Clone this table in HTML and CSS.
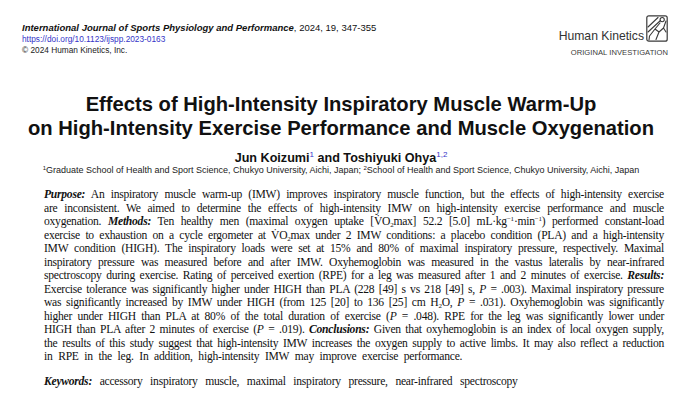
FILE: index.html
```html
<!DOCTYPE html>
<html lang="en">
<head>
<meta charset="utf-8">
<title>Effects of High-Intensity Inspiratory Muscle Warm-Up</title>
<link rel="stylesheet" href="styles.css">
</head>
<body>
<div class="page">
  <header class="masthead">
    <div class="citation">
      <div class="journal"><span class="jname">International Journal of Sports Physiology and Performance</span>, 2024, 19, 347-355</div>
      <div class="doi">https://doi.org/10.1123/ijspp.2023-0163</div>
      <div class="copy">© 2024 Human Kinetics, Inc.</div>
    </div>
    <div class="brand">
      <div class="brand-row">
        <span class="brand-name">Human Kinetics</span>
        <svg class="logo" viewBox="0 0 22 27" width="22" height="27" aria-hidden="true">
          <rect x="0.8" y="0.8" width="20.4" height="25.4" rx="2" fill="none" stroke="#3a3a3a" stroke-width="1.2"/>
          <circle cx="16.2" cy="4.6" r="2.1" fill="none" stroke="#3a3a3a" stroke-width="1.1"/>
          <path d="M2 12 L12 2.5 M2 17 L14.5 5.5 M14 8 L9 14 L13 17 L10 24.5 M9 14 L3.5 21 L3 25 M13 17 L17.5 13 L20 6 M17.5 13 L20 17" fill="none" stroke="#3a3a3a" stroke-width="1.1" stroke-linejoin="round" stroke-linecap="round"/>
        </svg>
      </div>
      <div class="section-label">ORIGINAL INVESTIGATION</div>
    </div>
  </header>

  <h1 class="title">Effects of High-Intensity Inspiratory Muscle Warm-Up<br>on High-Intensity Exercise Performance and Muscle Oxygenation</h1>

  <p class="authors">Jun Koizumi<sup class="ref">1</sup> and Toshiyuki Ohya<sup class="ref">1,2</sup></p>
  <p class="affil"><sup>1</sup>Graduate School of Health and Sport Science, Chukyo University, Aichi, Japan; <sup>2</sup>School of Health and Sport Science, Chukyo University, Aichi, Japan</p>

  <div class="abstract">
    <span class="ln"><b>Purpose:</b> An inspiratory muscle warm-up (IMW) improves inspiratory muscle function, but the effects of high-intensity exercise</span>
    <span class="ln">are inconsistent. We aimed to determine the effects of high-intensity IMW on high-intensity exercise performance and muscle</span>
    <span class="ln">oxygenation. <b>Methods:</b> Ten healthy men (maximal oxygen uptake [V̇O<sub>2</sub>max] 52.2 [5.0] mL·kg<sup>−1</sup>·min<sup>−1</sup>) performed constant-load</span>
    <span class="ln">exercise to exhaustion on a cycle ergometer at V̇O<sub>2</sub>max under 2 IMW conditions: a placebo condition (PLA) and a high-intensity</span>
    <span class="ln">IMW condition (HIGH). The inspiratory loads were set at 15% and 80% of maximal inspiratory pressure, respectively. Maximal</span>
    <span class="ln">inspiratory pressure was measured before and after IMW. Oxyhemoglobin was measured in the vastus lateralis by near-infrared</span>
    <span class="ln">spectroscopy during exercise. Rating of perceived exertion (RPE) for a leg was measured after 1 and 2 minutes of exercise. <b>Results:</b></span>
    <span class="ln">Exercise tolerance was significantly higher under HIGH than PLA (228 [49] s vs 218 [49] s, <i>P</i> = .003). Maximal inspiratory pressure</span>
    <span class="ln">was significantly increased by IMW under HIGH (from 125 [20] to 136 [25] cm H<sub>2</sub>O, <i>P</i> = .031). Oxyhemoglobin was significantly</span>
    <span class="ln">higher under HIGH than PLA at 80% of the total duration of exercise (<i>P</i> = .048). RPE for the leg was significantly lower under</span>
    <span class="ln">HIGH than PLA after 2 minutes of exercise (<i>P</i> = .019). <b>Conclusions:</b> Given that oxyhemoglobin is an index of local oxygen supply,</span>
    <span class="ln">the results of this study suggest that high-intensity IMW increases the oxygen supply to active limbs. It may also reflect a reduction</span>
    <span class="ln last">in RPE in the leg. In addition, high-intensity IMW may improve exercise performance.</span>
  </div>

  <p class="keywords"><b>Keywords:</b> accessory inspiratory muscle, maximal inspiratory pressure, near-infrared spectroscopy</p>
</div>
</body>
</html>
```

FILE: styles.css
```css
html, body {
  margin: 0;
  padding: 0;
  background: #ffffff;
}

.page {
  width: 680px;
  height: 400px;
  overflow: hidden;
  box-sizing: border-box;
  padding: 15px 12px 0 22px;
  color: #111;
}

.masthead {
  display: flex;
  justify-content: space-between;
  align-items: flex-start;
}

.citation {
  font-family: "Liberation Sans", Arial, sans-serif;
  padding-top: 7px;
}

.journal {
  font-size: 9.5px;
  line-height: 12px;
  color: #111;
}

.jname {
  font-weight: bold;
  font-style: italic;
}

.doi {
  font-size: 8.3px;
  line-height: 11px;
  color: #3434c8;
}

.copy {
  font-size: 8.3px;
  line-height: 11px;
  color: #222;
}

.brand {
  display: flex;
  flex-direction: column;
  align-items: flex-end;
  font-family: "Liberation Sans", Arial, sans-serif;
}

.brand-row {
  display: flex;
  align-items: flex-end;
  gap: 2px;
}

.brand-name {
  font-size: 12.2px;
  line-height: 14px;
  color: #333;
  margin-bottom: -1px;
}

.logo {
  display: block;
}

.section-label {
  font-size: 7.6px;
  line-height: 10px;
  color: #3a3a3a;
  margin-top: 6px;
  letter-spacing: 0.05px;
}

.title {
  font-family: "Liberation Sans", Arial, sans-serif;
  font-weight: bold;
  font-size: 20.2px;
  line-height: 24px;
  text-align: center;
  margin: 34px 0 0 -8px;
  color: #111;
}

.authors {
  font-family: "Liberation Sans", Arial, sans-serif;
  font-weight: bold;
  font-size: 12.6px;
  line-height: 13px;
  text-align: center;
  margin: 12px 0 0 -8px;
}

.authors .ref {
  color: #3434c8;
  font-weight: normal;
  font-size: 8px;
  line-height: 0;
  vertical-align: 5px;
}

.affil {
  font-family: "Liberation Sans", Arial, sans-serif;
  font-size: 9px;
  line-height: 10px;
  text-align: center;
  margin: 0 0 0 -8px;
  color: #222;
}

.affil sup {
  font-size: 6px;
  line-height: 0;
  vertical-align: 3px;
}

.abstract {
  font-family: "Liberation Serif", "Times New Roman", serif;
  font-size: 11.6px;
  letter-spacing: -0.25px;
  line-height: 13.5px;
  margin: 13px 0 0 22px;
  width: 620px;
  color: #111;
}

.ln {
  display: block;
  text-align: justify;
  text-align-last: justify;
  white-space: nowrap;
}

.ln.last {
  text-align-last: left;
  word-spacing: 3px;
}

.abstract b, .keywords b {
  font-style: italic;
  font-weight: bold;
}

.abstract sub, .abstract sup {
  font-size: 7px;
  line-height: 0;
}

.abstract sub {
  vertical-align: -1.5px;
}

.abstract sup {
  vertical-align: 4px;
}

.keywords {
  font-family: "Liberation Serif", "Times New Roman", serif;
  font-size: 11.6px;
  letter-spacing: -0.25px;
  word-spacing: 5px;
  line-height: 13px;
  margin: 11px 0 0 22px;
  color: #111;
}
```
